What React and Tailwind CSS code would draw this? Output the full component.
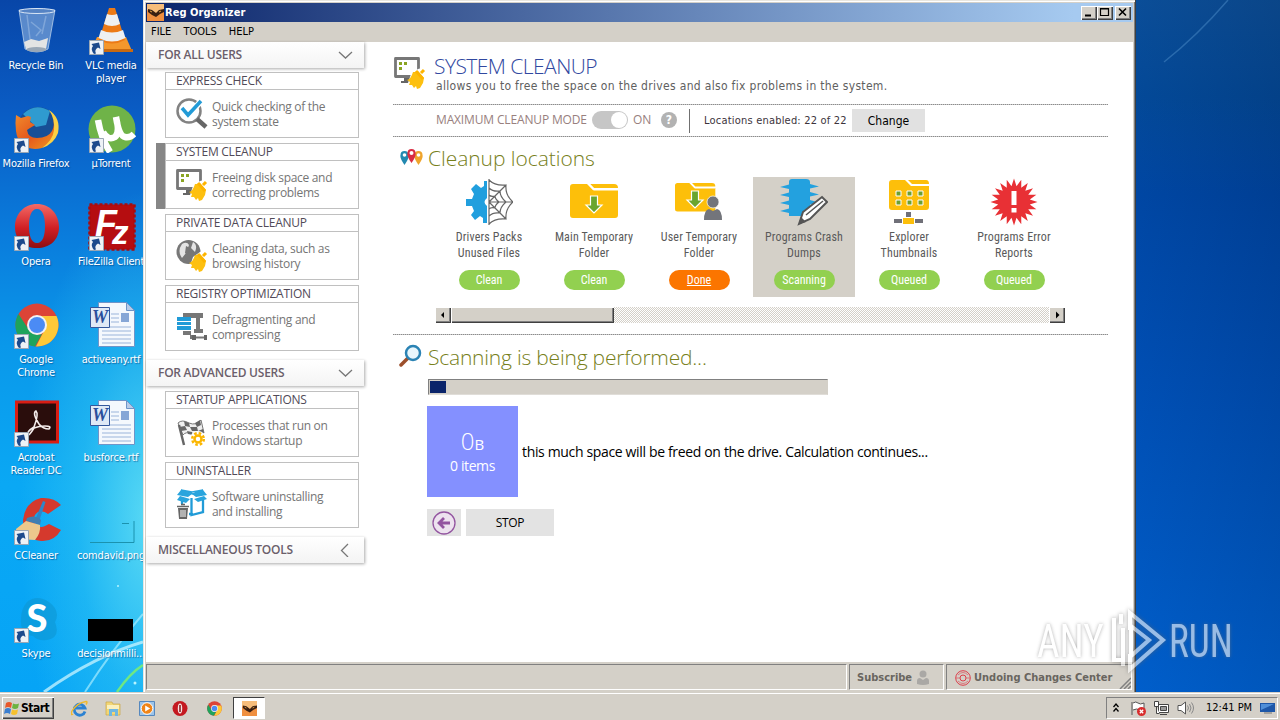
const UI = 'font-["DejaVu_Sans_Condensed","DejaVu_Sans",sans-serif] [font-stretch:75%]'
const SEGOE = 'font-["Open_Sans","Noto_Sans",sans-serif] [font-stretch:100%]'
const NARROW = 'font-["Liberation_Sans_Narrow","Roboto_Condensed",Roboto,sans-serif] [font-stretch:75%]'

const DESKTOP = [
  [
    { icon: BinIcon, lines: ['Recycle Bin'] },
    { icon: FirefoxIcon, lines: ['Mozilla Firefox'], link: true },
    { icon: OperaIcon, lines: ['Opera'], link: true },
    { icon: ChromeIcon, lines: ['Google', 'Chrome'], link: true },
    { icon: AcrobatIcon, lines: ['Acrobat', 'Reader DC'], link: true },
    { icon: CCleanerIcon, lines: ['CCleaner'], link: true },
    { icon: SkypeIcon, lines: ['Skype'], link: true },
  ],
  [
    { icon: VlcIcon, lines: ['VLC media', 'player'], link: true },
    { icon: TorrentIcon, lines: ['µTorrent'], link: true },
    { icon: FileZillaIcon, lines: ['FileZilla Client'], link: true },
    { icon: WordIcon, lines: ['activeany.rtf'] },
    { icon: WordIcon, lines: ['busforce.rtf'] },
    { icon: BlankIcon, lines: ['comdavid.png'] },
    { icon: BlackIcon, lines: ['decisionmilli...'] },
  ],
]

const ALL_USERS = [
  { title: 'EXPRESS CHECK', lines: ['Quick checking of the', 'system state'], icon: CheckIcon },
  { title: 'SYSTEM CLEANUP', lines: ['Freeing disk space and', 'correcting problems'], icon: CleanupIcon, active: true },
  { title: 'PRIVATE DATA CLEANUP', lines: ['Cleaning data, such as', 'browsing history'], icon: PrivateIcon },
  { title: 'REGISTRY OPTIMIZATION', lines: ['Defragmenting and', 'compressing'], icon: RegistryIcon },
]

const ADVANCED = [
  { title: 'STARTUP APPLICATIONS', lines: ['Processes that run on', 'Windows startup'], icon: StartupIcon },
  { title: 'UNINSTALLER', lines: ['Software uninstalling', 'and installing'], icon: UninstallIcon },
]

const LOCATIONS = [
  { lines: ['Drivers Packs', 'Unused Files'], status: 'Clean', icon: DriversIcon },
  { lines: ['Main Temporary', 'Folder'], status: 'Clean', icon: MainFolderIcon },
  { lines: ['User Temporary', 'Folder'], status: 'Done', icon: UserFolderIcon },
  { lines: ['Programs Crash', 'Dumps'], status: 'Scanning', icon: DumpsIcon, active: true },
  { lines: ['Explorer', 'Thumbnails'], status: 'Queued', icon: ThumbsIcon },
  { lines: ['Programs Error', 'Reports'], status: 'Queued', icon: ErrorIcon },
]

export default function App() {
  return (
    <div className={`relative flex h-[720px] w-[1280px] flex-col overflow-hidden bg-[#004a9c] text-[11px] text-black ${UI}`}>
      <div className="flex h-[692px]">
        <Desktop />
        <Window />
        <RightWallpaper />
      </div>
      <Taskbar />
      <Watermark />
    </div>
  )
}

function Desktop() {
  return (
    <div className="relative w-[143px] shrink-0 overflow-hidden bg-[linear-gradient(180deg,#0846a8_0%,#0a5cc4_16%,#0a7cdc_34%,#0a98ea_50%,#0aa8f4_70%,#06a4f6_100%)]">
      <div className="absolute inset-0 bg-[radial-gradient(ellipse_130px_330px_at_150px_520px,#6ee6f4cc_0%,#3ccdf266_55%,#3ccdf200_100%)]" />
      <svg className="absolute bottom-0 left-0" width="143" height="140" viewBox="0 0 143 140" fill="none">
        <path d="M44 140Q95 104 143 90" stroke="#c9f4ff" strokeWidth="3" opacity=".75" />
        <path d="M85 140Q112 98 143 62" stroke="#a5ecff" strokeWidth="2" opacity=".7" />
        <path d="M117 140Q130 121 143 113" stroke="#7cf06e" strokeWidth="2.5" opacity=".85" />
        <circle cx="135" cy="131" r="1.5" fill="#b8f4ff" />
        <circle cx="118" cy="34" r="1" fill="#b8f4ff" />
      </svg>
      <div className="relative flex gap-[3px] pt-[7px]">
        {DESKTOP.map((column, i) => (
          <div key={i} className="flex w-[72px] shrink-0 flex-col">
            {column.map(item => (
              <DesktopItem key={item.lines[0]} {...item} />
            ))}
          </div>
        ))}
      </div>
    </div>
  )
}

function DesktopItem({ icon: Icon, lines, link }) {
  return (
    <div className="flex h-[98px] flex-col items-center">
      <div className="relative ml-[2px] h-12 w-12">
        <Icon />
        {link && (
          <svg className="absolute bottom-0 left-px" width="15" height="15" viewBox="0 0 15 15">
            <path d="M.5.5h14v14H.5z" fill="#eef2f6" stroke="#9aa7b5" />
            <path d="M5 14Q1 9 4 6L2.500 4 10 2.500 11.500 9 9 7.500Q5 10 7 13.500z" fill="#1c4a8c" />
          </svg>
        )}
      </div>
      <div className="mt-1 flex flex-col items-center text-[11px] leading-[13px] tracking-[-.2px] whitespace-nowrap text-white [text-shadow:1px_1px_1px_#00306a88]">
        {lines.map(line => <span key={line}>{line}</span>)}
      </div>
    </div>
  )
}

function RightWallpaper() {
  return (
    <div className="relative flex-1 bg-[linear-gradient(180deg,#0d4b8c_0%,#04458c_14%,#00429a_28%,#004cae_55%,#0057be_80%,#0060cc_100%)]">
      <div className="absolute inset-0 bg-[linear-gradient(90deg,#0058c833_0%,#00307833_100%)]" />
      <svg className="absolute top-0 left-0" width="144" height="80" viewBox="0 0 144 80" fill="none">
        <path d="M28 62Q62 35 92 0" stroke="#4b8cc8" strokeWidth="1.500" opacity=".5" />
      </svg>
    </div>
  )
}

function Window() {
  return (
    <div className="flex w-[993px] shrink-0 flex-col border-r border-[#404040] bg-[#d4d0c8] pt-[3px] shadow-[inset_1px_1px_0_#e8e6e0,inset_2px_2px_0_#fff,inset_-1px_0_0_#808080]">
      <div className="mr-[2px] ml-[3px] flex h-[19px] items-center bg-[linear-gradient(90deg,#0a246a,#a6caf0_94%)] pr-[2px] pl-px">
        <AppIcon size={17} />
        <span className="ml-px pt-[2px] text-[11px] font-bold tracking-[.05px] text-white">Reg Organizer</span>
        <div className="ml-auto flex">
          <CaptionButton><path d="M4 9.500h6" strokeWidth="2" /></CaptionButton>
          <CaptionButton><path d="M3.500 2.500h8v7h-8zM3 3h9" strokeWidth="1.200" /></CaptionButton>
          <div className="w-[2px]" />
          <CaptionButton><path d="m4 2.500 7 7M11 2.500l-7 7" strokeWidth="1.600" /></CaptionButton>
        </div>
      </div>
      <div className="mx-[3px] flex h-5 items-center gap-3 pt-px pl-[5px] text-[11px]">
        <span>FILE</span>
        <span>TOOLS</span>
        <span>HELP</span>
      </div>
      <div className="mr-[2px] ml-[3px] flex h-[620px] bg-white">
        <Sidebar />
        <Main />
      </div>
      <StatusBar />
    </div>
  )
}

function CaptionButton({ children }) {
  return (
    <div className="h-[14px] w-4 bg-[#d4d0c8] shadow-[inset_1px_1px_0_#fff,inset_-1px_-1px_0_#404040,inset_-2px_-2px_0_#808080]">
      <svg width="16" height="14" viewBox="0 0 16 14" fill="none" stroke="#000">{children}</svg>
    </div>
  )
}

function Sidebar() {
  return (
    <div className={`flex w-[218px] flex-col ${SEGOE}`}>
      <Group title="FOR ALL USERS" open />
      <div className="mt-1 mb-[9px] flex flex-col gap-[5px]">
        {ALL_USERS.map(card => <SideCard key={card.title} {...card} />)}
      </div>
      <Group title="FOR ADVANCED USERS" open />
      <div className="mt-[5px] mb-[9px] flex flex-col gap-[5px]">
        {ADVANCED.map(card => <SideCard key={card.title} {...card} />)}
      </div>
      <Group title="MISCELLANEOUS TOOLS" />
    </div>
  )
}

function Group({ title, open }) {
  return (
    <div className="flex h-[26px] shrink-0 items-center justify-between bg-linear-to-b from-white to-[#f4f4f4] pr-[11px] pl-3 shadow-[1px_1px_3px_#00000055]">
      <span className="text-[12px] font-semibold tracking-[-.25px] text-[#6b5f6b]">{title}</span>
      <svg width="16" height="14" viewBox="0 0 16 14" fill="none" stroke="#777" strokeWidth="1.300">
        {open ? <path d="m2 4 6.500 6L15 4" /> : <path d="M11 1 4.500 7.500 11 14" />}
      </svg>
    </div>
  )
}

function SideCard({ title, lines, icon: Icon, active }) {
  return (
    <div className="flex h-[66px] pl-[10px]">
      <div className={active ? 'w-[9px] bg-[#868686]' : 'w-[9px]'} />
      <div className="w-[194px] border border-[#c0c0c0]">
        <div className="flex h-[17px] items-center border-b border-[#c0c0c0] pl-[10px] text-[12px] tracking-[-.25px] text-[#514a57]">
          {title}
        </div>
        <div className="flex h-[47px] items-center pl-[10px]">
          <Icon />
          <div className="ml-[4px] flex flex-col text-[12px] leading-[15px] tracking-[-.3px] whitespace-nowrap text-[#757575]">
            {lines.map(line => <span key={line}>{line}</span>)}
          </div>
        </div>
      </div>
    </div>
  )
}

function Main() {
  return (
    <div className="flex flex-1 flex-col pl-[29px]">
      <div className="flex h-[62px] pt-[14px] pl-px">
        <CleanupIcon />
        <div className="ml-2 flex flex-col">
          <h1 className={`h-[22px] text-[21px] leading-[20px] font-light tracking-[-.55px] text-[#3048a0] ${SEGOE}`}>SYSTEM CLEANUP</h1>
          <p className="pl-[2px] text-[12px] leading-[16px] tracking-[.32px] text-[#606060]">
            allows you to free the space on the drives and also fix problems in the system.
          </p>
        </div>
      </div>
      <Rule />
      <div className="flex h-[31px] items-center pl-[43px]">
        <span className={`w-[151px] pb-px text-[12px] tracking-[-.15px] whitespace-nowrap text-[#98807e] ${SEGOE}`}>MAXIMUM CLEANUP MODE</span>
        <span className="mb-px ml-[5px] flex h-[18px] w-9 justify-end rounded-full bg-[#c6c6c6] p-px">
          <span className="h-4 w-4 rounded-full bg-white" />
        </span>
        <span className={`ml-[5px] w-[18px] pb-px text-[12px] text-[#98807e] ${SEGOE}`}>ON</span>
        <span className="mb-px ml-[10px] flex h-4 w-4 items-center justify-center rounded-full bg-[#b2b2b2] text-[12px] font-bold text-white">?</span>
        <span className="ml-3 h-6 w-px bg-[#707070]" />
        <span className="ml-[14px] w-[143px] pt-[2px] text-[11px] tracking-[.2px] whitespace-nowrap text-[#3c343c]">Locations enabled: 22 of 22</span>
        <button className="ml-[5px] h-[23px] w-[73px] bg-[#e1e1e1] text-[12px]">Change</button>
      </div>
      <Rule />
      <div className="flex h-10 items-center pl-[7px]">
        <PinsIcon />
        <h2 className={`ml-[5px] pt-[2px] text-[21px] leading-[24px] font-light tracking-[-.05px] text-[#77801a] ${SEGOE}`}>Cleanup locations</h2>
      </div>
      <div className="flex gap-[3px] pl-[45px]">
        {LOCATIONS.map(item => <Location key={item.lines[0]} {...item} />)}
      </div>
      <ScrollBar />
      <div className="h-[11px]" />
      <Rule />
      <div className="flex h-[44px] items-center pl-[6px]">
        <MagnifierIcon />
        <h2 className={`ml-[6px] text-[21px] leading-[24px] font-light tracking-[-.21px] text-[#77801a] ${SEGOE}`}>Scanning is being performed...</h2>
      </div>
      <div className="ml-[35px] h-4 w-[400px] border border-t-[#808080] border-r-[#d4d0c8] border-b-[#e0ddd8] border-l-[#808080] bg-[#d4d0c8] p-px">
        <div className="h-3 w-4 bg-[#0a246a]" />
      </div>
      <div className="mt-[11px] ml-[34px] flex items-center">
        <div className={`flex h-[91px] w-[91px] flex-col items-center justify-center bg-[#8490ff] text-white ${SEGOE}`}>
          <div className="leading-[22px]"><span className="text-[24px] font-light">0</span><span className="text-[15px]">B</span></div>
          <span className="text-[14px] leading-[17px] tracking-[-.4px]">0 items</span>
        </div>
        <span className={`ml-1 text-[14px] tracking-[-.345px] text-black ${SEGOE}`}>this much space will be freed on the drive. Calculation continues...</span>
      </div>
      <div className="mt-3 ml-[34px] flex h-[27px] gap-[5px]">
        <button className="flex w-[34px] items-center justify-center bg-[#e3e3e3]">
          <svg width="24" height="24" viewBox="0 0 24 24" fill="none" stroke="#9355a0">
            <circle cx="12" cy="12" r="11" strokeWidth="1.300" fill="#ede3ef" />
            <path d="M18 12H7M12 7l-5 5 5 5" strokeWidth="2.800" />
          </svg>
        </button>
        <button className={`w-[88px] bg-[#e3e3e3] text-[12px] tracking-[-.3px] ${SEGOE}`}>STOP</button>
      </div>
    </div>
  )
}

function Rule() {
  return <div className="h-px w-[715px] shrink-0 bg-[repeating-linear-gradient(90deg,#8c8c8c_0_1px,#c8c8c8_1px_2px)]" />
}

function Location({ lines, status, icon: Icon, active }) {
  return (
    <div className={`flex h-[120px] w-[102px] flex-col items-center pt-[1px] ${active ? 'bg-[#d4d0c8]' : ''}`}>
      <Icon />
      <div className={`mt-[3px] flex flex-col items-center text-[12px] leading-4 tracking-[.15px] whitespace-nowrap text-[#5a5a5a] ${NARROW}`}>
        {lines.map(line => <span key={line}>{line}</span>)}
      </div>
      <div className={`mt-[9px] flex h-5 w-[61px] items-center justify-center rounded-full text-[12px] text-white ${NARROW} ${status === 'Done' ? 'bg-[#fb7500] underline' : 'bg-[#92d050]'}`}>
        {status}
      </div>
    </div>
  )
}

function ScrollBar() {
  return (
    <div className="mt-[10px] ml-[42px] flex h-4 w-[630px] shrink-0 bg-[repeating-conic-gradient(#d4d0c8_0_25%,#fff_0_50%)] bg-size-[2px_2px]">
      <ScrollArrow><path d="M9 5v6L6 8z" /></ScrollArrow>
      <div className="w-[163px] bg-[#d4d0c8] shadow-[inset_1px_1px_0_#fff,inset_-1px_-1px_0_#404040,inset_-2px_-2px_0_#808080]" />
      <div className="flex-1" />
      <ScrollArrow><path d="M7 4.500v7l3.500-3.500z" /></ScrollArrow>
    </div>
  )
}

function ScrollArrow({ children }) {
  return (
    <div className="h-4 w-4 bg-[#d4d0c8] shadow-[inset_1px_1px_0_#fff,inset_-1px_-1px_0_#404040,inset_-2px_-2px_0_#808080]">
      <svg width="16" height="16" viewBox="0 0 16 16">{children}</svg>
    </div>
  )
}

function StatusBar() {
  const panel = 'h-[26px] border border-t-[#808080] border-l-[#808080] border-r-white border-b-white flex items-center pt-[2px] text-[11px] font-bold text-[#69655f]'
  return (
    <div className="mx-[3px] mt-[2px] flex gap-[2px]">
      <div className={`w-[701px] ${panel}`} />
      <div className={`w-[95px] gap-1 pl-[7px] ${panel}`}>
        Subscribe
        <svg width="14" height="16" viewBox="0 0 14 16" fill="#aaa8a5">
          <circle cx="7" cy="4" r="3.500" />
          <path d="M1 14v-3q0-3 3-3l3 2 3-2q3 0 3 3v3q-6 2-12 0" />
        </svg>
      </div>
      <div className={`relative flex-1 gap-[3px] pl-2 whitespace-nowrap ${panel}`}>
        <svg width="16" height="16" viewBox="0 0 16 16" fill="none" stroke="#dc3f4c">
          <circle cx="8" cy="8" r="7.300" /><circle cx="8" cy="8" r="3" />
          <path d="M1 8h4M11 8h4M3 5q5-5 10 0M3 11q5 5 10 0" opacity=".6" />
        </svg>
        Undoing Changes Center
        <svg className="absolute right-0 bottom-0" width="12" height="12" viewBox="0 0 12 12" stroke="#808080" strokeWidth="1.500">
          <path d="M1 12 12 1M5 12l7-7M9 12l3-3" />
        </svg>
      </div>
    </div>
  )
}

function Taskbar() {
  return (
    <div className="flex h-7 items-center border-t border-[#d4d0c8] bg-[#d4d0c8] pt-[3px] pr-[2px] pl-[2px] shadow-[inset_0_1px_0_#fff]">
      <div className="flex h-[22px] w-[52px] items-center gap-[1px] bg-[#d4d0c8] pl-[2px] text-[12px] font-bold shadow-[inset_1px_1px_0_#fff,inset_-1px_-1px_0_#404040,inset_-2px_-2px_0_#808080]">
        <svg width="16" height="16" viewBox="0 0 16 16">
          <path d="M2 3q3-2 6 0L7 8Q4 6 1 8z" fill="#e8582a" />
          <path d="M9 3.500q3 1.500 6 0L14 8q-3 2-6 0z" fill="#6cb33f" />
          <path d="M1 9q3-2 6 0l-1 5q-3-2-6 0z" fill="#3b7fd0" />
          <path d="M8 9.500q3 1.500 6 0L13 14q-3 2-6 0z" fill="#f6c12c" />
        </svg>
        <span className="tracking-[-.5px]">Start</span>
      </div>
      <div className="ml-[17px] flex items-center gap-[17px]">
        <svg width="17" height="17" viewBox="0 0 17 17" fill="none">
          <path d="M14 11.500A5.500 5.500 0 1 1 14 8H5" stroke="#2c82d2" strokeWidth="2.800" />
          <path d="M2 14Q-1 16 1 11 6 3 15 1.500q2 0 0 3" stroke="#f0b92c" strokeWidth="1.400" />
        </svg>
        <svg width="17" height="17" viewBox="0 0 17 17">
          <path d="M1 2h6l1 2h7v11H1z" fill="#f2d675" stroke="#c8a848" strokeWidth=".7" />
          <path d="M2 5h12v4H2z" fill="#fbf0bd" />
          <path d="M4 9h9v7h-3v-4H7v4H4z" fill="#6fb7df" />
        </svg>
        <svg width="16" height="17" viewBox="0 0 16 17">
          <path d="M.5 1.500h15v14H.5z" fill="#9cc4ea" stroke="#5688be" />
          <circle cx="8" cy="8.500" r="5.800" fill="#f08418" stroke="#fff" />
          <path d="m6.200 5.500 5 3-5 3z" fill="#fff" />
        </svg>
        <svg width="16" height="17" viewBox="0 0 16 17">
          <circle cx="8" cy="8.500" r="7.500" fill="#c41920" />
          <ellipse cx="8" cy="8.500" rx="2.200" ry="5" fill="#f6e6e6" />
          <path d="M8 5v7" stroke="#801015" strokeWidth="1.500" />
        </svg>
        <div className="pl-[2px]"><ChromeMark size={15} /></div>
      </div>
      <div className="ml-[11px] flex h-[22px] w-8 items-center justify-center border border-t-[#404040] border-r-white border-b-white border-l-[#404040] bg-white">
        <AppIcon size={15} />
      </div>
      <div className="ml-auto flex h-[22px] w-[172px] items-center border border-t-[#808080] border-r-white border-b-white border-l-[#808080] pl-[5px]">
        <svg width="8" height="12" viewBox="0 0 8 12" fill="none" stroke="#000" strokeWidth="1.300"><path d="m1.500 5 2.500-3 2.500 3M1.500 9.500 4 6.500l2.500 3" /></svg>
        <svg className="ml-[10px]" width="17" height="17" viewBox="0 0 17 17">
          <path d="M2 2v13M3 3q3-2 5 0t6 0v7q-3 2-5 0t-6 0" fill="#fff" stroke="#555" />
          <circle cx="11.500" cy="11.500" r="4.500" fill="#d82c2c" />
          <path d="m9.800 9.800 3.400 3.400M13.200 9.800l-3.400 3.400" stroke="#fff" strokeWidth="1.300" />
        </svg>
        <svg className="ml-[6px]" width="16" height="16" viewBox="0 0 16 16" fill="#fff" stroke="#444">
          <path d="M5.500 4.500h10v8h-10zM7 14.500h7" />
          <path d="M7.500 6.500h6v4h-6z" fill="#999" />
          <path d="M1.500 1.500h4v5h-4zM3.500 6.500v7h3" />
        </svg>
        <svg className="ml-[8px]" width="17" height="16" viewBox="0 0 17 16" fill="none" stroke="#555">
          <path d="M1 5.500h3L8.500 2v12L4 10.500H1z" fill="#fff" />
          <path d="M10.500 5.500q2 2.500 0 5M12.500 4q3 4 0 8M14.500 2.500q4 5.500 0 11" stroke="#888" />
        </svg>
        <span className="ml-[12px] text-[11px] whitespace-nowrap">12:41 PM</span>
        <svg className="mr-px ml-auto" width="16" height="14" viewBox="0 0 16 14">
          <path d="M0 2h15v9H0z" fill="#1d57a8" /><path d="M1 3h13L1 9z" fill="#4f8fd8" /><path d="M4 12h8" stroke="#777" />
        </svg>
      </div>
    </div>
  )
}

function Watermark() {
  return (
    <div className={`absolute top-[608px] left-[1037px] flex h-[66px] items-center text-[46px] leading-none text-white opacity-60 [text-shadow:0_0_4px_#777] ${NARROW}`}>
      <span className="inline-block w-[74px] origin-left scale-x-[.85]">ANY</span>
      <svg width="58" height="66" viewBox="0 0 58 66" fill="none" stroke="#fff" strokeWidth="4" className="drop-shadow-[0_0_2px_#666]">
        <path d="M3 10v42h7M10 16V6M12 20v38M19 22V5l33 27-33 29V46M20 18l18 14-18 16z" />
      </svg>
      <span className="inline-block origin-left scale-x-[.81]">RUN</span>
    </div>
  )
}

function AppIcon({ size }) {
  return (
    <svg width={size} height={size} viewBox="0 0 17 17">
      <path d="M0 0h17v17H0z" fill="#f09040" />
      <path d="M0 0h17v6L8.500 9 0 6z" fill="#f7bd7a" />
      <path d="m1 5 4 1 4 3 3-3 5-1v3l-4 2-4 3-4-2-4-3z" fill="#3a2012" />
      <path d="m3 7 2 1M12 8l2-1" stroke="#e8a040" />
    </svg>
  )
}

/* desktop icons */

function BinIcon() {
  return (
    <svg width="48" height="48" viewBox="0 0 48 48">
      <path d="M6 3 12 42q12 6 23 0L42 3z" fill="#8fb4e0" fillOpacity=".6" stroke="#b8cfea" strokeWidth=".8" />
      <ellipse cx="24" cy="4" rx="18" ry="2.500" fill="#5583c4" stroke="#d9e6f5" />
      <path d="m11 35 7-3 8 2 9-3-2 11q-10 4-20 0z" fill="#e3e4e4" />
      <path d="m14 8 3 24M33 9l-4 18M18 15l10 8-5 6" stroke="#d8e8fa" strokeWidth="1.500" fill="none" opacity=".3" />
      <ellipse cx="23.500" cy="42.500" rx="10" ry="2.500" fill="#99a7b6" />
    </svg>
  )
}

function FirefoxIcon() {
  return (
    <svg width="48" height="48" viewBox="0 0 48 48">
      <defs>
        <linearGradient id="fox" x2="1" y2="1"><stop stopColor="#f08a2c" /><stop offset=".5" stopColor="#e4571c" /><stop offset="1" stopColor="#f09a20" /></linearGradient>
      </defs>
      <circle cx="25" cy="22" r="20" fill="#174f96" />
      <path d="M10 9Q22-3 37 6l-4 14-10 2z" fill="#2f9bd0" />
      <path d="M3 10l5 3 7-2 3 1-1 5 5 3-5 3-3 2q1 8 10 8 11 0 15-7 3-6 1-12 5 9 1 16-6 14-19 14Q5 43 3 26q-1-9 0-16" fill="url(#fox)" />
      <path d="M36 5q12 8 9 23-4 11-16 15 11-8 12-18 1-11-5-20" fill="#fbd044" />
    </svg>
  )
}

function OperaIcon() {
  return (
    <svg width="48" height="48" viewBox="0 0 48 48">
      <defs>
        <linearGradient id="opera" x2="0" y2="1"><stop stopColor="#f46a66" /><stop offset=".55" stopColor="#d01f24" /><stop offset="1" stopColor="#8e0e12" /></linearGradient>
      </defs>
      <path fillRule="evenodd" d="M24 1C11 1 2 11 2 24s9 21 22 21 22-8 22-21S37 1 24 1m0 5c6 0 8 8 8 17s-2 17-8 17-8-8-8-17 2-17 8-17" fill="url(#opera)" />
    </svg>
  )
}

function ChromeIcon() {
  return <div className="pt-[2px] pl-[2px]"><ChromeMark size={44} /></div>
}

function ChromeMark({ size }) {
  return (
    <svg width={size} height={size} viewBox="0 0 44 44">
      <circle cx="22" cy="22" r="21.500" fill="#dc4437" />
      <path d="M22 13h19.500A21.500 21.500 0 0 1 21 43.500L30 26z" fill="#fdc938" />
      <path d="M3.500 11 14 27q5 6 13 4l-7 12.500A21.500 21.500 0 0 1 3.500 11" fill="#1ea35c" />
      <circle cx="22" cy="22" r="10" fill="#f3f3f3" />
      <circle cx="22" cy="22" r="8" fill="#4b8bf5" />
    </svg>
  )
}

function AcrobatIcon() {
  return (
    <svg width="48" height="48" viewBox="0 0 48 48">
      <path d="M3.500 3h41v40h-41z" fill="#2a0d0c" stroke="#d81d14" strokeWidth="3" />
      <path d="M15 36q-2-3 6-8 5-13 2-16-4 2 3 13 4 5 10 5 3-3-4-3-6 0-11 2-5 8-6 7" fill="none" stroke="#f4ecec" strokeWidth="1.600" />
    </svg>
  )
}

function CCleanerIcon() {
  return (
    <svg width="48" height="48" viewBox="0 0 48 48">
      <path d="m48 8-13 9q-5-4-10-2-6 4-3 11 4 6 10 3l4-2 12 6q-7 12-20 11Q10 42 10 23 12 5 28 1q13-1 20 7" fill="#d5392d" />
      <path d="m30 4 2.500 1-6 18-4-1z" fill="#2f86c8" />
      <path d="M14 21q8-4 14 2l-1 5-14-4z" fill="#3f7eb2" />
      <path d="M13 24 3 32l1 10 18 1q6-7 5-15z" fill="#ecc88c" />
    </svg>
  )
}

function SkypeIcon() {
  return (
    <svg width="48" height="48" viewBox="0 0 48 48">
      <path d="M14 7q10-8 22 0 12 9 6 20 6 16-8 18-10 1-14-4-13-1-12-17 0-10 6-17" fill="#0d96d2" fillOpacity=".6" />
      <text x="24" y="37" textAnchor="middle" fontFamily="Lato, sans-serif" fontWeight="900" fontSize="38" fill="#fff">S</text>
    </svg>
  )
}

function VlcIcon() {
  return (
    <svg width="48" height="48" viewBox="0 0 48 48">
      <path d="m9 30-6 14h41l-6-14z" fill="#f4972c" />
      <path d="M3 45h42v-3H4z" fill="#c96a10" />
      <path d="M21 1h6l10 32q-13 7-26 0z" fill="#ec7a16" />
      <path d="m19 7-3 10q8 4 16 0L29 7q-5 2-10 0M13 23l-2.500 8q13.500 7 27 0L35 23q-11 5-22 0" fill="#eef0f2" />
    </svg>
  )
}

function TorrentIcon() {
  return (
    <svg width="48" height="48" viewBox="0 0 48 48">
      <circle cx="24" cy="24" r="23.500" fill="#6fb348" />
      <path d="M10 15q3 18 12 32M15 27q5 9 12 5 5-4 1-20 3 19 9 20 5 1 9-3" fill="none" stroke="#fff" strokeWidth="6.500" />
    </svg>
  )
}

function FileZillaIcon() {
  return (
    <svg width="48" height="48" viewBox="0 0 48 48">
      <path d="M1.500 1.500h45v45h-45z" fill="#b50d10" stroke="#a80c0e" strokeWidth="2.500" strokeDasharray="3 2" />
      <text x="7" y="33" fontFamily="Liberation Sans, sans-serif" fontStyle="italic" fontWeight="700" fontSize="36" fill="#fff">F</text>
      <text x="24" y="41" fontFamily="Liberation Sans, sans-serif" fontStyle="italic" fontWeight="700" fontSize="33" fill="#fff">z</text>
    </svg>
  )
}

function WordIcon() {
  return (
    <svg width="48" height="48" viewBox="0 0 48 48">
      <path d="M10.500 1.500h28l8 8v36h-36z" fill="#f4f8fd" stroke="#6f94c8" />
      <path d="M38.500 1.500v8h8z" fill="#b8cce8" stroke="#6f94c8" />
      <path d="M23 13h8M23 17h8M23 21h8M14 26h29M14 30h29M14 34h29M14 38h29M14 42h29" stroke="#9ab4da" />
      <path d="M33 12h8v9h-8z" fill="#86a6d6" />
      <path d="M2.500 6.500h19v20h-19z" fill="#dfe9f6" stroke="#35589c" />
      <text x="12" y="22" textAnchor="middle" fontFamily="Liberation Serif, serif" fontStyle="italic" fontWeight="700" fontSize="18" fill="#2b4f9c">W</text>
    </svg>
  )
}

function BlankIcon() {
  return (
    <svg width="48" height="48" viewBox="0 0 48 48">
      <path d="M2 45.500h44V24M34 26.500h7" fill="none" stroke="#1b92ae" />
    </svg>
  )
}

function BlackIcon() {
  return <div className="flex h-12 items-end pb-[2px]"><div className="h-[22px] w-[45px] bg-black" /></div>
}

/* sidebar icons */

function CheckIcon() {
  return (
    <svg width="32" height="32" viewBox="0 0 32 32" fill="none">
      <circle cx="13" cy="13" r="11.500" stroke="#828282" strokeWidth="2.500" />
      <path d="m21 21 9 8" stroke="#666" strokeWidth="4.500" />
      <path d="m6 10 6 8L25 3" stroke="#fff" strokeWidth="6" />
      <path d="m6 10 6 7L25 3" stroke="#239bd7" strokeWidth="3.500" />
    </svg>
  )
}

function Brush() {
  return (
    <g>
      <path d="m17 18 7-5 4-1 3 5 1 8-7 8-11-6z" fill="#fff" />
      <path d="m21 16 3-1 6 7-1 5-3 5-3 1-1-3-2 2-2-3-3 0 1-3-3-2q4-1 6-8" fill="#fdc010" />
      <path d="m22 15 7 8M27 17l3-3" stroke="#fdb400" strokeWidth="3" />
    </g>
  )
}

function CleanupIcon() {
  return (
    <svg width="32" height="34" viewBox="0 0 32 34" fill="none">
      <path d="M1.500 2.500h23v18h-23z" stroke="#777" strokeWidth="2.800" strokeLinejoin="round" />
      <path d="M10 22h7v3h3v2H7v-2h3z" fill="#666" />
      <path d="M5 6h3v3H5zM10 6h3v3h-3zM5 11h3v3H5z" fill="#8aa422" />
      <Brush />
    </svg>
  )
}

function PrivateIcon() {
  return (
    <svg width="32" height="34" viewBox="0 0 32 34" fill="none">
      <circle cx="12.500" cy="13" r="12" fill="#777" />
      <path d="M6 5q5-3 7 1l-3 8-4 5q-5-7 0-14M17 3q5 3 2 10l-4-4z" fill="#fff" fillOpacity=".8" />
      <path d="m10 7 4 2-2 7-3-2z" fill="#777" />
      <Brush />
    </svg>
  )
}

function RegistryIcon() {
  return (
    <svg width="32" height="32" viewBox="0 0 32 32" fill="none">
      <path d="M7 2h20v5h-3v11h3v4h-9v-4h2V7H7zM7 20h8v4h5v4h-6v-4H7z" fill="#777" />
      <path d="M18 26.500h12" stroke="#777" strokeWidth="2" />
      <path d="M16 24h4v5h-4zM28 24h3v5h-3z" fill="#666" />
      <path d="M1 6h14v4H1zM1 11h14v3H1zM1 15h14v4H1z" fill="#219bd7" />
    </svg>
  )
}

function StartupIcon() {
  return (
    <svg width="32" height="32" viewBox="0 0 32 32">
      <path d="M2 6Q6 2 13 6q7 3 12-3l3 13q-7 5-12 1-6-3-9 1z" fill="#eee" stroke="#777" />
      <path d="m8 4 5 2 1 4-5-1zM19 6l5-3 1 5-4 2zM3 10l6-1 2 4-6 1zM14 10l7 0 1 4-6 0zM11 14l5 1 1 3-5-1zM22 14l5-2 1 4-5 2z" fill="#666" />
      <path d="m3 8 5 20" stroke="#666" strokeWidth="2.500" />
      <Gear x={22} y={22} />
    </svg>
  )
}

function Gear({ x, y }) {
  return (
    <g transform={`translate(${x} ${y})`} fill="none">
      <circle r="6" stroke="#fff" strokeWidth="4" />
      <circle r="5.800" stroke="#fbb600" strokeWidth="2.500" strokeDasharray="2.550 2" />
      <circle r="3.500" stroke="#fbb600" strokeWidth="2.500" />
    </g>
  )
}

function UninstallIcon() {
  return (
    <svg width="32" height="34" viewBox="0 0 32 34" fill="none">
      <path d="m5 3 11 2 11-2-10 4z" fill="#fff" stroke="#29a4dd" strokeWidth="1.500" />
      <path d="m5 3-4 5 11 2 4-3zM27 3l4 5-11 2-4-3zM4 9l10 3-4 4-9-3zM28 9l-10 3 4 3 9-3z" fill="#29a4dd" />
      <path d="M6 14v3M15.500 11v17l11.500-3V13M16 27h-3" stroke="#219bd7" strokeWidth="2.300" />
      <path d="M1 19.500h12M5 17.500h4" stroke="#666" strokeWidth="1.500" />
      <path d="M2 21h10l-1 11H3z" fill="#666" />
      <path d="M5 23v7M7 23v7M9 23v7" stroke="#fff" />
    </svg>
  )
}

/* main panel icons */

function PinsIcon() {
  const pin = 'M0 0q-5-7-4-10a4 4 0 0 1 8 0q1 3-4 10'
  return (
    <svg width="23" height="18" viewBox="0 0 23 18">
      <g transform="translate(4.500 17)"><path d={pin} fill="#2389b0" /><circle cy="-10" r="1.800" fill="#fff" /></g>
      <g transform="translate(18.500 17)"><path d={pin} fill="#efa42c" /><circle cy="-10" r="1.800" fill="#fff" /></g>
      <g transform="translate(11.500 15)"><path d={pin} fill="#d92d43" /><circle cy="-10" r="2" fill="#fff" /></g>
    </svg>
  )
}

function MagnifierIcon() {
  return (
    <svg className="mb-[3px]" width="23" height="23" viewBox="0 0 23 23" fill="none">
      <path d="m2 21 7-7" stroke="#9c4f2c" strokeWidth="3.500" strokeLinecap="round" />
      <circle cx="14" cy="9" r="7" fill="#e8f6fc" stroke="#2b83b4" strokeWidth="2.500" />
    </svg>
  )
}

function DriversIcon() {
  return (
    <svg width="48" height="48" viewBox="0 0 48 48">
      <path d="M22 3v17q-5 4 0 8v17h-4v-5l-3-2-5 4-4-5 3-4-2-5H1v-7h6l2-5-3-5 5-5 5 4 3-2V3z" fill="#219fde" />
      <path d="M24 1v46M24 24h24M24 24 41 7M24 24l17 17M24 2q6 6 17 5-1 10 7 17-8 7-7 17-11-1-17 5M24 10q4 4 11 3 0 6 6 11-6 5-6 11-7-1-11 3M24 17q2 2 6 1 0 3 4 6-4 3-4 6-4-1-6 1" fill="none" stroke="#666" strokeWidth="1.200" />
    </svg>
  )
}

function FolderShape() {
  return (
    <g>
      <path d="M3 6h14l6 6h25v25q0 3-3 3H3q-3 0-3-3V9q0-3 3-3" fill="#fdbf0a" />
      <path d="M20 6h24q4 0 4 4H24z" fill="#fdbf0a" />
      <path d="m18 5 6 6.500h24" fill="none" stroke="#fff" strokeWidth="1.800" />
    </g>
  )
}

function DownArrow({ x, y }) {
  return <path transform={`translate(${x} ${y})`} d="M-3.500-8h7v9h4.500L0 9-8 1h4.500z" fill="#6aa52f" stroke="#fff" strokeWidth="1.200" />
}

function MainFolderIcon() {
  return (
    <svg width="48" height="48" viewBox="0 0 48 48">
      <FolderShape />
      <DownArrow x={24} y={26} />
    </svg>
  )
}

function UserFolderIcon() {
  return (
    <svg width="48" height="48" viewBox="0 0 48 48">
      <g transform="scale(.84)"><FolderShape /></g>
      <DownArrow x={20} y={21} />
      <circle cx="38" cy="24" r="6" fill="#73757b" stroke="#fff" strokeWidth=".7" />
      <path d="M29 42q0-10 5-11l4 2 4-2q5 1 5 11z" fill="#73757b" />
    </svg>
  )
}

function DumpsIcon() {
  return (
    <svg width="48" height="48" viewBox="0 0 48 48">
      <path d="M9 4q0-3 3-3h14q4 0 4 3v2l9 2.500-9 2V14l9 2.500-9 2V22l9 2.500-9 2V30l6 2-6 6H9v-3l-9-2 9-2.500V27l-9-2 9-2.500V19l-9-2 9-2.500V11L0 9l9-2.500z" fill="#23a1df" />
      <path d="m19 46 4-12 19-15 5 5-17 17z" fill="#fff" stroke="#555" strokeWidth="2" />
      <path d="m19 46 2-7 5 5z" fill="#555" />
      <path d="m26 37 17-14" stroke="#555" strokeWidth="1.500" />
    </svg>
  )
}

function ThumbsIcon() {
  return (
    <svg width="48" height="48" viewBox="0 0 48 48">
      <path d="M7 2h13l6 6h18v21q0 3-3 3H7q-3 0-3-3V5q0-3 3-3M23 2h18q3 0 3 4H27z" fill="#fdbf0a" />
      <path d="M11 13h5v5h-5zM22 13h5v5h-5zM33 13h5v5h-5zM11 22h5v5h-5zM22 22h5v5h-5zM33 22h5v5h-5z" fill="#6c9f30" stroke="#fff" />
      <path d="M21 34h5v5h-5zM9 41h8v4H9zM30 41h8v4h-8z" fill="#707078" />
      <path d="M18 40h11v6H18z" fill="#fdbf0a" />
    </svg>
  )
}

function ErrorIcon() {
  const spikes = Array.from({ length: 40 }, (_, i) => {
    const r = i % 2 ? 16 : 23.500
    const a = (i * Math.PI) / 20
    return `${24 + r * Math.sin(a)},${24 - r * Math.cos(a)}`
  }).join(' ')
  return (
    <svg width="48" height="48" viewBox="0 0 48 48">
      <polygon points={spikes} fill="#e83035" />
      <path d="M21.500 13h5v14h-5zM21.500 30h5v4.500h-5z" fill="#fff" />
    </svg>
  )
}
